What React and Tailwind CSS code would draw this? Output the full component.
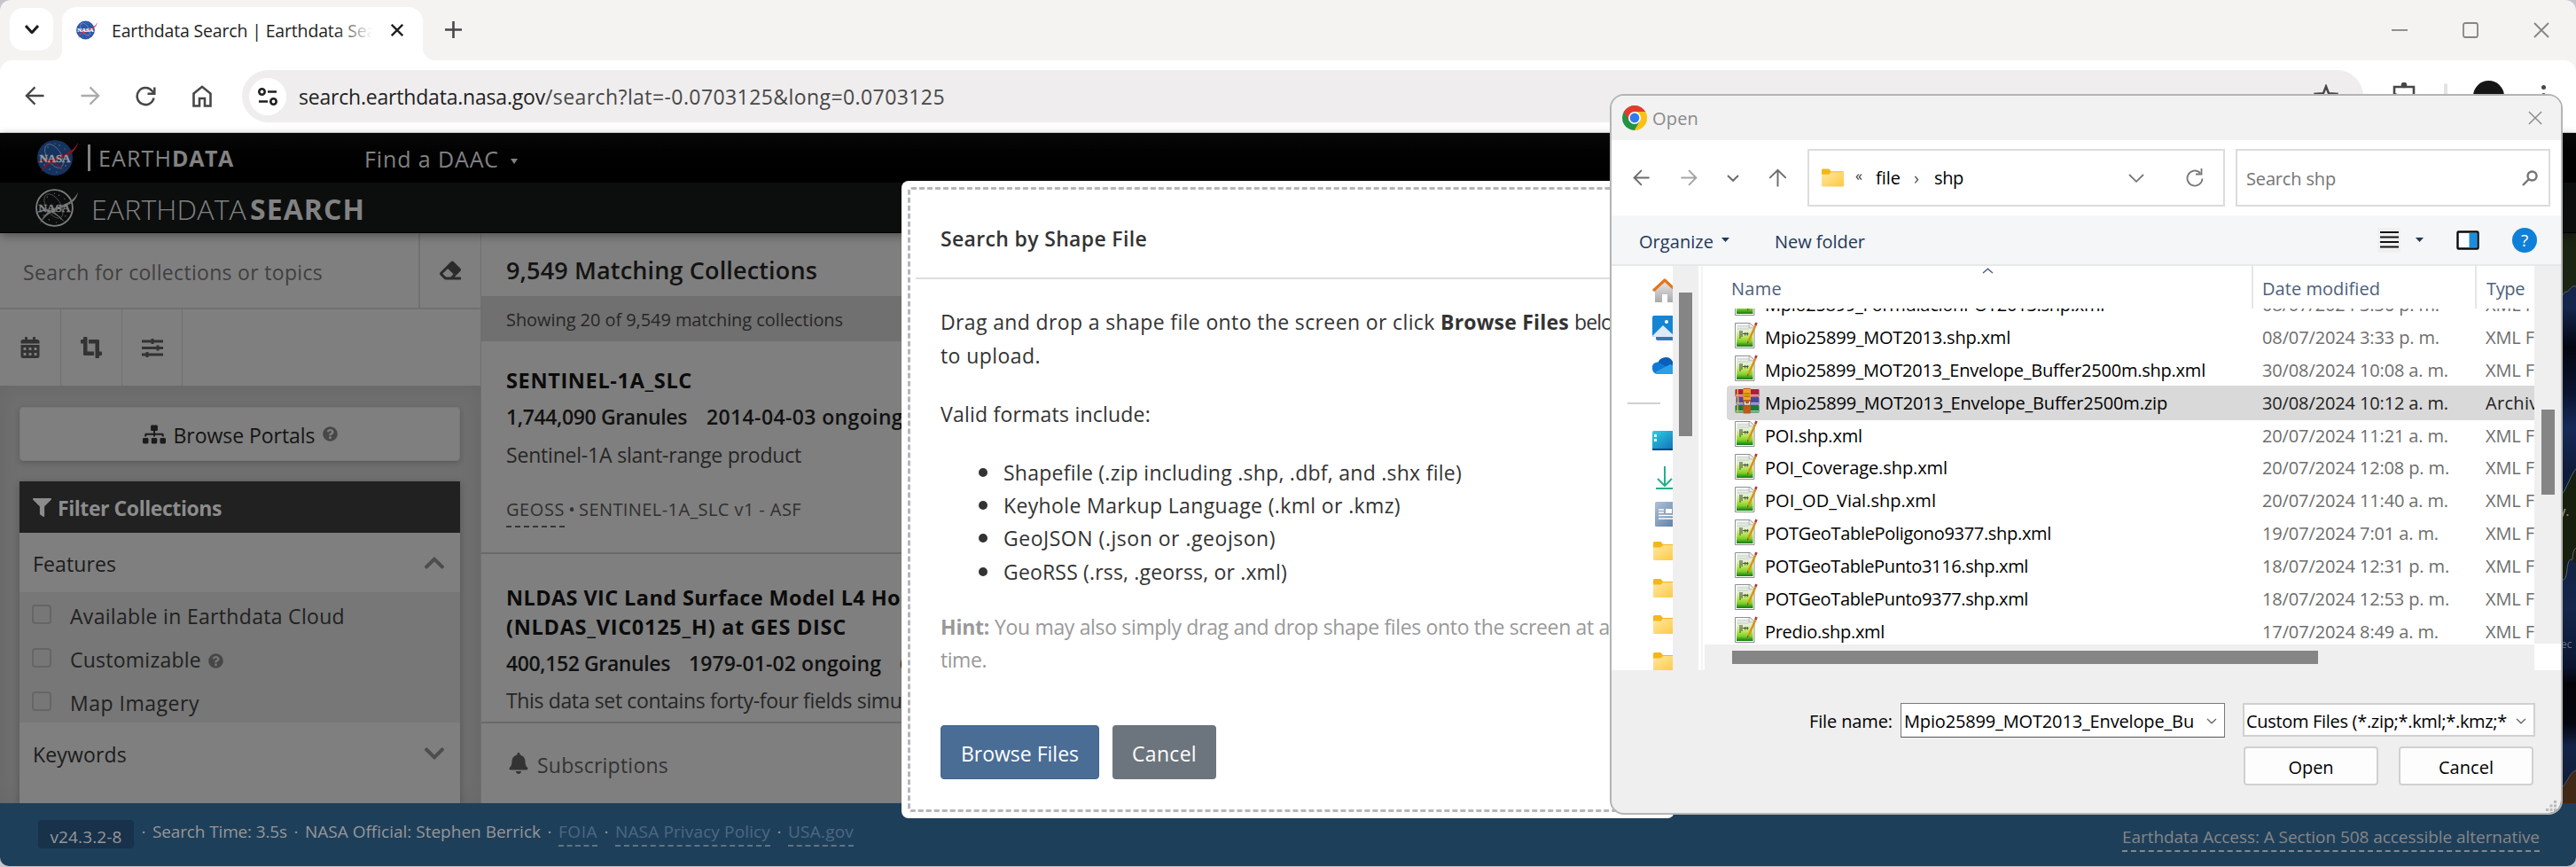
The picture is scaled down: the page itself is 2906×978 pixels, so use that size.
import React, { useLayoutEffect, useRef } from "react";
import {
  FaEraser,
  FaCalendarAlt,
  FaCropAlt,
  FaSitemap,
  FaQuestionCircle,
  FaFilter,
  FaBell,
  FaChevronUp,
  FaChevronDown,
} from "react-icons/fa";

/* Text run whose tracking is adjusted so that it spans `w` pixels. */
function T({ w, className = "", children }) {
  const ref = useRef(null);
  useLayoutEffect(() => {
    const el = ref.current;
    if (!w) return;
    el.style.letterSpacing = "0px";
    const natural = el.getBoundingClientRect().width;
    const n = el.textContent.length;
    el.style.letterSpacing = `${(w - natural) / n}px`;
  }, [w, children]);
  return (
    <span ref={ref} className={"inline-block shrink-0 whitespace-pre " + className}>
      {children}
    </span>
  );
}

/* ---------- shared icons ---------- */

const Arrow = ({ className = "", s = 24, sw = 2 }) => (
  <svg className={className} width={s} height={s} viewBox="0 0 24 24" fill="none" stroke="currentColor" strokeWidth={sw}>
    <path d="M23.500 12H2M12.500 1.500L2 12l10.500 10.500" />
  </svg>
);

const Chev = ({ className = "", w = 14, h = 8, sw = 1.8 }) => (
  <svg className={className} width={w} height={h} viewBox={`0 0 ${w} ${h}`} fill="none" stroke="currentColor" strokeWidth={sw}>
    <path d={`M1 1L${w / 2} ${h - 1.2}L${w - 1} 1`} />
  </svg>
);

const Caret = ({ className = "" }) => (
  <svg className={className} width="9" height="5" viewBox="0 0 9 5" fill="currentColor">
    <path d="M0 0h9L4.500 5z" />
  </svg>
);

const CloseX = ({ className = "", s = 18, sw = 1.6 }) => (
  <svg className={className} width={s} height={s} viewBox="0 0 18 18" fill="none" stroke="currentColor" strokeWidth={sw}>
    <path d="M1 1l16 16M17 1L1 17" />
  </svg>
);

const Meatball = ({ w, h, fill, red, ink, outline }) => (
  <svg width={w} height={h} viewBox="0 0 48 42" className="shrink-0">
    <circle cx="22" cy="21" r="20" fill={fill} stroke={outline || "none"} strokeWidth={outline ? 1.8 : 0} />
    <ellipse cx="21" cy="19" rx="8" ry="15" transform="rotate(-32 21 19)" fill="none" stroke={ink} strokeWidth=".7" opacity=".7" />
    <g fill={ink} opacity=".8">
      <circle cx="14" cy="9" r=".7" /><circle cx="27" cy="7" r=".7" /><circle cx="33" cy="11" r=".6" />
      <circle cx="10" cy="29" r=".7" /><circle cx="16" cy="34" r=".7" /><circle cx="29" cy="33" r=".8" />
      <circle cx="34" cy="30" r=".7" /><circle cx="24" cy="37" r=".6" /><circle cx="22" cy="5" r=".6" />
    </g>
    <path d="M48 3.500C42 16 30 17 19 22.500C13 26 9 31 5.500 39C10 32 15 28 21 25C33 19 46 17 48 3.500Z" fill={red} />
    <path d="M.5 27C8 22 12 22 16 23C22 25 29 31 34.500 38C27 31 21 26.500 15 25C10 24 6 25 .5 27Z" fill={red} />
    <text x="22" y="25.500" textAnchor="middle" fontFamily="Liberation Serif, serif" fontWeight="700" fontSize="13" textLength="35" fill={ink} stroke={ink} strokeWidth=".4">NASA</text>
  </svg>
);

const Folder = ({ w = 26, h = 21 }) => (
  <svg width={w} height={h} viewBox="0 0 26 21" className="shrink-0">
    <defs>
      <linearGradient id="fold" x1="0" y1="0" x2="1" y2="1">
        <stop offset="0" stopColor="#ffe8a3" /><stop offset="1" stopColor="#fec83f" />
      </linearGradient>
    </defs>
    <path d="M0 1.500A1.500 1.500 0 0 1 1.500 0H8.500L11 3H24.500A1.500 1.500 0 0 1 26 4.500V8H0Z" fill="#f6b519" />
    <path d="M0 6.500H8.500L11 4H25A1 1 0 0 1 26 5V19.500A1.500 1.500 0 0 1 24.500 21H1.500A1.500 1.500 0 0 1 0 19.500Z" fill="url(#fold)" />
  </svg>
);

/* ---------- browser chrome ---------- */

function TabStrip() {
  return (
    <div className="flex h-[68px] shrink-0 bg-[#f4f3f1]">
      <div className="ml-[11px] mt-[9px] flex h-[48px] w-[49px] items-center justify-center rounded-[15px] bg-white text-[#1d1d1f]">
        <Chev w={16} h={10} sw={3} />
      </div>
      <div className="flex h-full">
        <div className="w-[10px] self-end bg-white">
          <div className="h-[20px] rounded-br-[14px] bg-[#f4f3f1]" />
        </div>
        <div className="mt-[8px] flex w-[407px] items-center rounded-t-[16px] bg-white pb-[9px] pl-[15px]">
          <Meatball w={25} h={24} fill="#2a58a8" red="#e0323f" ink="#ffffff" />
          <div className="relative ml-[16px] mt-[3px] w-[294px] overflow-hidden text-[19.5px] leading-[30px] text-[#1f1f1f]">
            <T w={306}>Earthdata Search | Earthdata Sear</T>
            <div className="absolute inset-y-0 right-0 w-[42px] bg-gradient-to-r from-white/0 to-white" />
          </div>
          <CloseX className="ml-[21px] text-[#1f1f1f]" s={14} sw={3} />
        </div>
        <div className="w-[14px] self-end bg-white">
          <div className="h-[20px] rounded-bl-[14px] bg-[#f4f3f1]" />
        </div>
      </div>
      <svg className="ml-[11px] mt-[24px]" width="19" height="19" viewBox="0 0 19 19" stroke="#474747" strokeWidth="2.600">
        <path d="M9.500 0v19M0 9.500h19" />
      </svg>
      <div className="ml-auto mr-[30px] mt-[25px] flex gap-[62px] text-[#858585]">
        <svg width="18" height="18" stroke="currentColor" strokeWidth="1.800"><path d="M0 9h18" /></svg>
        <svg width="18" height="18" stroke="currentColor" strokeWidth="1.800" fill="none"><rect x="1" y="1" width="16" height="16" rx="2" /></svg>
        <CloseX sw={1.8} />
      </div>
    </div>
  );
}

function AddressBar() {
  return (
    <div className="bg-[#f4f3f1] shrink-0">
      <div className="flex h-[82px] rounded-t-[14px] border-b border-[#dcdcdc] bg-white pt-[11px]">
        <div className="flex h-[58px] w-[273px] items-center pl-[28px] text-[#474747]">
          <Arrow s={22} sw={2.500} />
          <Arrow s={22} sw={2.500} className="ml-[41px] rotate-180 text-[#ababab]" />
          <svg className="ml-[40px]" width="23" height="23" viewBox="0 0 23 23" fill="none" stroke="currentColor" strokeWidth="2.500">
            <path d="M20.500 13.500A9.500 9.500 0 1 1 18.500 5.500L21 8.500M21.300 1.500V8.800H13.500" />
          </svg>
          <svg className="ml-[41px]" width="22" height="25" viewBox="0 0 22 25" fill="none" stroke="currentColor" strokeWidth="2.600">
            <path d="M1.500 9.500L11 1.800L20.500 9.500V23.500H14V15H8V23.500H1.500Z" />
          </svg>
        </div>
        <div className="flex h-[59px] w-[2393px] shrink-0 items-center rounded-full bg-[#efedee] pl-[8px]">
          <div className="flex size-[42px] items-center justify-center rounded-full bg-white">
            <svg width="22" height="20" viewBox="0 0 22 20" fill="none" stroke="#1f1f1f" strokeWidth="2.600">
              <circle cx="4.500" cy="4.500" r="3.200" /><path d="M11 4.500h10M1 15.500h10" /><circle cx="17.500" cy="15.500" r="3.200" />
            </svg>
          </div>
          <T w={278} className="ml-[14px] text-[23px] leading-[36px] text-[#1f1f1f]">search.earthdata.nasa.gov</T>
          <T w={451} className="text-[23px] leading-[36px] text-[#474747]">/search?lat=-0.0703125&amp;long=0.0703125</T>
          <svg className="ml-auto mr-[28px]" width="28" height="27" viewBox="0 0 28 27" fill="none" stroke="#474747" strokeWidth="2.500">
            <path d="M14 2.500l3 7.800 8.500.5-6.500 5.500 2 8.500-7-4.500-7 4.500 2-8.500-6.500-5.500 8.500-.5z" />
          </svg>
        </div>
        <svg className="ml-[33px] mt-[14px]" width="28" height="30" viewBox="0 0 28 30" fill="none" stroke="#474747" strokeWidth="2.600">
          <path d="M2 5h22v9a3.500 3.500 0 0 1 0 8v6H2v-7a4 4 0 0 0 0-8z" /><circle cx="13" cy="3" r="2" fill="#474747" />
        </svg>
        <div className="ml-[30px] mt-[15px] h-[28px] w-[4px] rounded bg-[#e4e2e3]" />
        <div className="ml-[29px] mt-[12px] flex size-[35px] items-center justify-center rounded-full bg-[#161616] text-[8px] text-[#aaaaaa]">[P]</div>
        <div className="ml-[42px] mt-[17px] flex flex-col gap-[4px]">
          <span className="size-[5px] rounded-full bg-[#474747]" />
          <span className="size-[5px] rounded-full bg-[#474747]" />
          <span className="size-[5px] rounded-full bg-[#474747]" />
        </div>
      </div>
    </div>
  );
}

/* ---------- Earthdata page ---------- */

function SiteHeaders() {
  return (
    <div className="relative z-10 shrink-0 shadow-[0_3px_10px_rgba(0,0,0,0.35)]">
      <div className="flex h-[56px] items-center bg-gradient-to-b from-[#09090a] to-black pl-[40px] text-[#828282]">
        <Meatball w={48} h={42} fill="#15335f" red="#861420" ink="#9a9a9a" />
        <div className="ml-[11px] h-[30px] w-[3px] bg-[#828282]" />
        <T w={83} className="ml-[9px] mt-[1px] text-[25px]">EARTH</T>
        <T w={70} className="mt-[1px] text-[25px] font-bold">DATA</T>
        <T w={152} className="ml-[147px] mt-[4px] text-[25px]">Find a DAAC</T>
        <svg className="ml-[13px] mt-[8px]" width="8" height="6" fill="#828282"><path d="M0 0h8L4 6z" /></svg>
      </div>
      <div className="flex h-[57px] items-center border-b border-black bg-[#0c0e0e] pl-[39px] text-[#828282]">
        <Meatball w={49} h={43} fill="#0c0e0e" red="#6f6f6f" ink="#808080" outline="#7d7d7d" />
        <T w={175} className="ml-[15px] mt-[3px] text-[32px] font-light">EARTHDATA</T>
        <T w={130} className="ml-[4px] mt-[3px] text-[32px] font-bold">SEARCH</T>
      </div>
    </div>
  );
}

function CheckRow({ label, w, help }) {
  return (
    <div className="flex h-[49px] items-center pl-[14px]">
      <div className="size-[22px] rounded-[4px] border-2 border-[#666]" />
      <T w={w} className="ml-[21px] mt-[5px] text-[23px] leading-[32px] text-[#212121]">{label}</T>
      {help && <FaQuestionCircle className="ml-[8px] mt-[8px] size-[17px] text-[#474747]" />}
    </div>
  );
}

function Sidebar() {
  return (
    <div className="flex w-[543px] shrink-0 flex-col border-r border-[#707070] bg-[#7f7f7f]">
      <div className="flex h-[86px] shrink-0 border-b-2 border-[#717171]">
        <div className="flex w-[474px] items-center border-r-2 border-[#717171] pl-[26px]">
          <T w={338} className="mt-[4px] text-[23px] text-[#404040]">Search for collections or topics</T>
        </div>
        <div className="flex flex-1 items-center justify-center text-[#2b2b2b]">
          <FaEraser className="size-[24px]" />
        </div>
      </div>
      <div className="flex h-[86px] shrink-0 text-[#333]">
        <div className="flex w-[69px] items-center justify-center border-r border-[#707070]"><FaCalendarAlt className="size-[24px]" /></div>
        <div className="flex w-[69px] items-center justify-center border-r border-[#707070]"><FaCropAlt className="size-[24px]" /></div>
        <div className="flex w-[68px] items-center justify-center border-r border-[#707070]">
          <svg width="24" height="21" viewBox="0 0 24 21" stroke="currentColor" strokeWidth="3"><path d="M0 3h24M0 10.500h24M0 18h24" /><path d="M12 0v6M18 7.500v6M6 15v6" /></svg>
        </div>
      </div>
      <div className="flex-1 overflow-hidden bg-[#6f6f6f] px-[22px] pt-[24px] shadow-[inset_0_0_24px_rgba(0,0,0,0.08)]">
        <div className="flex h-[61px] w-[497px] items-center justify-center rounded-[4px] border border-[#787878] bg-[#7f7f7f] shadow-[0_2px_6px_rgba(0,0,0,0.2)]">
          <FaSitemap className="size-[26px] text-[#1b1b1b]" />
          <T w={160} className="ml-[9px] mt-[3px] text-[23px] text-[#141414]">Browse Portals</T>
          <FaQuestionCircle className="ml-[8px] size-[17px] text-[#474747]" />
        </div>
        <div className="mt-[23px] w-[497px] shadow-[0_2px_8px_rgba(0,0,0,0.25)]">
          <div className="flex h-[58px] items-center bg-[#212121] pl-[15px] text-[#8c8c8c]">
            <FaFilter className="size-[21px]" />
            <T w={185} className="ml-[7px] mt-[3px] text-[23px] font-bold">Filter Collections</T>
          </div>
          <div className="flex h-[67px] items-center justify-between bg-[#7f7f7f] pl-[15px] pr-[16px] text-[23px] text-[#1b1b1b]">
            <T w={94} className="mt-[3px]">Features</T>
            <FaChevronUp className="size-[26px] text-[#4d4d4d]" />
          </div>
          <div className="h-[147px] bg-[#777]">
            <CheckRow label="Available in Earthdata Cloud" w={310} />
            <CheckRow label="Customizable" w={148} help />
            <CheckRow label="Map Imagery" w={146} />
          </div>
          <div className="flex h-[120px] justify-between bg-[#7f7f7f] pl-[15px] pr-[16px] pt-[19px] text-[23px] text-[#1b1b1b]">
            <T w={106}>Keywords</T>
            <FaChevronDown className="mt-[3px] size-[26px] text-[#4d4d4d]" />
          </div>
        </div>
      </div>
    </div>
  );
}

function Results() {
  return (
    <div className="flex w-[700px] shrink-0 flex-col overflow-hidden bg-[#7f7f7f] text-[23px] leading-[34px] text-[#111]">
      <div className="flex h-[71px] shrink-0 items-center pl-[28px]">
        <T w={351} className="mt-[12px] text-[27px] font-semibold text-[#131313]">9,549 Matching Collections</T>
      </div>
      <div className="flex h-[51px] shrink-0 items-center bg-[#707070] pl-[28px]">
        <T w={380} className="mt-[3px] text-[20px] text-[#262626]">Showing 20 of 9,549 matching collections</T>
      </div>
      <div className="flex h-[240px] shrink-0 flex-col border-b-2 border-[#6a6a6a] pl-[28px] pt-[27px]">
        <T w={210} className="self-start text-[23.5px] font-bold text-[#0b0b0b]">SENTINEL-1A_SLC</T>
        <div className="mt-[7px] flex font-[570]">
          <T w={204}>1,744,090 Granules</T>
          <T w={222} className="ml-[22px]">2014-04-03 ongoing</T>
        </div>
        <T w={333} className="mt-[9px] self-start text-[#262626]">Sentinel-1A slant-range product</T>
        <div className="mt-[28px] flex text-[20px] font-medium text-[#303030]">
          <T w={66} className="h-[37px] border-b-2 border-dashed border-[#363636]">GEOSS</T>
          <span className="w-[16px] text-center">•</span>
          <T w={251}>SENTINEL-1A_SLC v1 - ASF</T>
        </div>
      </div>
      <div className="flex h-[191px] shrink-0 flex-col border-b-2 border-[#6a6a6a] pl-[28px] pt-[33px]">
        <div className="flex text-[23.5px] leading-[33px] font-bold text-[#0b0b0b]">
          <T w={445}>NLDAS VIC Land Surface Model L4 Ho</T>
          <T>urly</T>
        </div>
        <T w={384} className="self-start text-[23.5px] leading-[33px] font-bold text-[#0b0b0b]">(NLDAS_VIC0125_H) at GES DISC</T>
        <div className="mt-[7px] flex font-[570]">
          <T w={185}>400,152 Granules</T>
          <T w={217} className="ml-[21px]">1979-01-02 ongoing</T>
          <T className="ml-[21px]">6</T>
        </div>
        <T w={452} className="mt-[8px] self-start text-[#262626]">This data set contains forty-four fields simul</T>
      </div>
      <div className="flex h-[90px] items-center pl-[30px] text-[#333]">
        <FaBell className="size-[24px]" />
        <T w={148} className="ml-[9px] mt-[4px]">Subscriptions</T>
      </div>
    </div>
  );
}

function MapStrip() {
  return (
    <div className="flex flex-1 justify-end overflow-hidden bg-[#04060f]">
      <svg width="20" height="643" viewBox="0 0 20 643" fill="none">
        <defs>
          <linearGradient id="sea" x1="0" y1="0" x2="0" y2="643" gradientUnits="userSpaceOnUse">
            <stop offset="0" stopColor="#14203a" /><stop offset=".13" stopColor="#14264d" /><stop offset=".2" stopColor="#04060f" />
            <stop offset=".28" stopColor="#0a1430" /><stop offset=".34" stopColor="#152a57" /><stop offset=".42" stopColor="#0e1b3a" />
            <stop offset=".66" stopColor="#14264a" /><stop offset=".76" stopColor="#0b1530" /><stop offset=".79" stopColor="#030309" />
            <stop offset=".86" stopColor="#04050d" /><stop offset=".9" stopColor="#122347" /><stop offset="1" stopColor="#101a30" />
          </linearGradient>
        </defs>
        <rect width="20" height="643" fill="url(#sea)" />
        <path d="M0 0H20V60C14 58 12 68 8 66L3 72L0 70Z" fill="#1b2313" />
        <path d="M3 72L8 66C12 68 14 58 20 60" stroke="#55616a" />
        <path d="M20 266C14 272 10 288 3 296V390C10 396 8 370 12 368L20 372Z" fill="#17200f" />
        <path d="M20 266C14 272 10 288 3 296M3 390C12 396 8 370 14 368C18 372 14 360 20 355" stroke="#59656e" />
        <path d="M20 606C12 608 10 622 3 626V643H20Z" fill="#3f2815" />
        <path d="M20 606C12 608 10 622 3 626" stroke="#4a5566" />
        <text x="1" y="319" fontFamily="Open Sans, sans-serif" fontSize="14" fontWeight="600" fill="#8a8a8a">y.</text>
        <text x="3" y="468" fontFamily="Open Sans, sans-serif" fontSize="12" fill="#66707c">ec</text>
      </svg>
    </div>
  );
}

const Dot = () => <span className="w-[20px] shrink-0 text-center">·</span>;

function Footer() {
  return (
    <div className="flex h-[71px] shrink-0 bg-[#1e3f5a] pl-[43px] pr-[41px] text-[19px] leading-[26px] text-[#979797]">
      <div className="mt-[19px] flex h-[32px] w-[108px] items-center justify-center rounded-[4px] bg-[#17324a]">
        <T w={81} className="mt-[5px]">v24.3.2-8</T>
      </div>
      <div className="ml-[1px] mt-[19px] flex font-medium">
        <Dot />
        <T w={152}>Search Time: 3.5s</T>
        <Dot />
        <T w={266}>NASA Official: Stephen Berrick</T>
        <Dot />
        <T w={44} className="h-[30px] border-b-2 border-dashed border-[#5f7385] font-normal text-[#4d6883]">FOIA</T>
        <Dot />
        <T w={175} className="h-[30px] border-b-2 border-dashed border-[#5f7385] font-normal text-[#4d6883]">NASA Privacy Policy</T>
        <Dot />
        <T w={74} className="h-[30px] border-b-2 border-dashed border-[#5f7385] font-normal text-[#4d6883]">USA.gov</T>
      </div>
      <T w={471} className="ml-auto mt-[25px] h-[30px] border-b-2 border-dashed border-[#868686] text-[#868686]">
        Earthdata Access: A Section 508 accessible alternative
      </T>
    </div>
  );
}

/* ---------- shape file modal ---------- */

const formats = [
  ["Shapefile (.zip including .shp, .dbf, and .shx file)", 517],
  ["Keyhole Markup Language (.kml or .kmz)", 448],
  ["GeoJSON (.json or .geojson)", 307],
  ["GeoRSS (.rss, .georss, or .xml)", 320],
];

function ShapeModal() {
  return (
    <div className="absolute left-[1017px] top-[204px] z-20 h-[719px] w-[872px] overflow-hidden rounded-[8px] bg-white p-[7px] text-[23px] leading-[38px] text-[#333]">
      <div className="flex h-[705px] flex-col rounded-[4px] border-[3px] border-dashed border-[#b7b6ba] px-[6px]">
        <div className="flex h-[101px] shrink-0 items-center border-b-2 border-[#dcdddd] pl-[28px]">
          <T w={233} className="mt-[10px] font-semibold">Search by Shape File</T>
        </div>
        <div className="pl-[28px] pt-[29px]">
          <div className="flex">
            <T w={564}>{"Drag and drop a shape file onto the screen or click "}</T>
            <T w={151} className="font-bold">{"Browse Files "}</T>
            <T w={60}>below</T>
          </div>
          <T w={113}>to upload.</T>
          <div className="mt-[28px]"><T w={237}>Valid formats include:</T></div>
          <ul className="mt-[28px]">
            {formats.map(([t, w]) => (
              <li key={t} className="flex h-[37.300px] items-center">
                <span className="ml-[43px] mr-[18px] size-[10px] rounded-full bg-[#333]" />
                <T w={w}>{t}</T>
              </li>
            ))}
          </ul>
          <div className="mt-[26px] flex leading-[36.500px] text-[#999]">
            <T w={61} className="font-bold">{"Hint: "}</T>
            <T w={694}>You may also simply drag and drop shape files onto the screen at a</T>
            <T>ny</T>
          </div>
          <div className="leading-[36.500px] text-[#999]"><T w={52}>time.</T></div>
        </div>
        <div className="mb-[34px] mt-auto flex gap-[15px] pl-[28px] text-white">
          <div className="flex h-[61px] w-[179px] items-center justify-center rounded-[4px] border border-[#44658b] bg-[#4a6d96]">
            <T w={133} className="mt-[3px]">Browse Files</T>
          </div>
          <div className="flex h-[61px] w-[117px] items-center justify-center rounded-[4px] bg-[#6c757d]">
            <T w={73} className="mt-[3px]">Cancel</T>
          </div>
        </div>
      </div>
    </div>
  );
}

/* ---------- Windows file picker ---------- */

const NotepadIcon = () => (
  <svg width="27" height="30" viewBox="0 0 27 30" className="shrink-0">
    <defs>
      <linearGradient id="npp" x1="0" y1="0" x2="0" y2="1">
        <stop offset="0" stopColor="#eef1f0" /><stop offset=".3" stopColor="#e3efcb" /><stop offset=".55" stopColor="#bfe85c" /><stop offset=".78" stopColor="#7fd02a" /><stop offset="1" stopColor="#0e7a12" />
      </linearGradient>
    </defs>
    <path d="M.5 1.500H17L22 6V29.500H.5Z" fill="#fff" stroke="#8d8d8d" />
    <path d="M2 3H16V8H20.500V28H2Z" fill="url(#npp)" />
    <path d="M3 5h12M3 8h13" stroke="#c3ccd4" strokeWidth="1" />
    <path d="M16 2v5h5" fill="#e6e6e6" stroke="#a5a5a5" strokeWidth=".8" />
    <path d="M6 10v9M8 10v7M9 13.500h6.500M11.700 12v3.500M14.300 12v3.500" stroke="#4a524c" strokeWidth="1.100" fill="none" />
    <path d="M15 23L23.500 4" stroke="#d69413" strokeWidth="2.400" />
    <path d="M23.300 4L24.500 1" stroke="#b3343f" strokeWidth="2.600" />
    <path d="M13.800 25L14.300 22L16 22.800Z" fill="#6b5a33" />
  </svg>
);

const RarIcon = () => (
  <svg width="28" height="29" viewBox="0 0 28 29" className="shrink-0">
    <rect x=".5" y="1" width="27" height="8.500" rx="1" fill="#b31b3c" /><rect x="1" y="7" width="26" height="1.500" fill="#e8b9c3" />
    <rect x="1.500" y="10" width="26" height="8.500" rx="1" fill="#4b46a0" /><rect x="2" y="16" width="25" height="1.500" fill="#b9b7e0" />
    <rect x=".5" y="19" width="27" height="8.500" rx="1" fill="#1a7a3c" /><rect x="1" y="25" width="26" height="1.500" fill="#9fd0ad" />
    <rect x="2.500" y="1" width="1.500" height="8" fill="#f2b51d" /><rect x="3" y="10" width="1.500" height="8" fill="#f2b51d" /><rect x="2.500" y="19" width="1.500" height="8" fill="#f2b51d" />
    <rect x="9.500" y="0" width="8.500" height="28.500" rx="1" fill="#c2581a" />
    <path d="M9.500 1h8.500v12h-8.500z" fill="#f0a51c" />
    <path d="M10.500 19V14.500h2V17h3V14.500h2V19Z" fill="#f4f4f4" stroke="#6b4a2a" strokeWidth=".6" />
    <path d="M10.500 6h6.500M10.500 9h6.500" stroke="#8a5a10" />
  </svg>
);

const ChromeIcon = () => (
  <svg width="28" height="28" viewBox="0 0 28 28">
    <path d="M14 14L1.880 7A14 14 0 0 1 26.120 7Z" fill="#e33b2e" />
    <path d="M14 14L26.120 7A14 14 0 0 1 14 28Z" fill="#fbc116" />
    <path d="M14 14L14 28A14 14 0 0 1 1.880 7Z" fill="#229342" />
    <path d="M14 7H26.120L20 17.500Z" fill="#fbc116" /><path d="M20 17.400L14 28L8.500 18Z" fill="#229342" />
    <path d="M14 7h12.120A14 14 0 0 0 1.880 7L8 17.500Z" fill="#e33b2e" />
    <path d="M20.200 17.500L14 28A14 14 0 0 0 26.120 7H14Z" fill="#fbc116" />
    <circle cx="14" cy="14" r="7" fill="#fff" /><circle cx="14" cy="14" r="5.400" fill="#2f7bee" />
  </svg>
);

const ENV = "Mpio25899_MOT2013_Envelope_Buffer2500m";
const files = [
  ["Mpio25899_FormulacionPOT2013.shp.xml", 383, "08/07/2024 3:36 p. m.", 200],
  ["Mpio25899_MOT2013.shp.xml", 277, "08/07/2024 3:33 p. m.", 200],
  [ENV + ".shp.xml", 497, "30/08/2024 10:08 a. m.", 210],
  [ENV + ".zip", 454, "30/08/2024 10:12 a. m.", 210, true],
  ["POI.shp.xml", 110, "20/07/2024 11:21 a. m.", 210],
  ["POI_Coverage.shp.xml", 206, "20/07/2024 12:08 p. m.", 211],
  ["POI_OD_Vial.shp.xml", 193, "20/07/2024 11:40 a. m.", 210],
  ["POTGeoTablePoligono9377.shp.xml", 323, "19/07/2024 7:01 a. m.", 199],
  ["POTGeoTablePunto3116.shp.xml", 297, "18/07/2024 12:31 p. m.", 211],
  ["POTGeoTablePunto9377.shp.xml", 297, "18/07/2024 12:53 p. m.", 211],
  ["Predio.shp.xml", 135, "17/07/2024 8:49 a. m.", 199],
];

function FileRow({ name, w, date, dw, selected }) {
  return (
    <div className={"flex h-[36.900px] w-[910px] shrink-0 items-center pl-[8px] " + (selected ? "rounded-l-[3px] bg-[#d9d9d9] text-black shadow-[0_0_0_1px_#d9d9d9]" : "text-[#6d6d6d]")}>
      <div className="-mt-[5px] flex w-[34px] shrink-0">{selected ? <RarIcon /> : <NotepadIcon />}</div>
      <div className="w-[561px] shrink-0 text-black"><T w={w}>{name}</T></div>
      <div className={"w-[252px] shrink-0 " + (selected ? "text-[#222]" : "")}><T w={dw}>{date}</T></div>
      <T w={selected ? 72 : 76} className={selected ? "text-[#222]" : ""}>{selected ? "Archivo" : "XML File"}</T>
    </div>
  );
}

function NavPane() {
  return (
    <div className="flex w-[69px] shrink-0 flex-col overflow-hidden bg-white pl-[46px] pt-[14px]">
      <svg width="30" height="28" viewBox="0 0 30 28" className="shrink-0">
        <defs><linearGradient id="wall" x1="0" y1="0" x2="0" y2="1"><stop offset="0" stopColor="#e8e8e8" /><stop offset="1" stopColor="#a9a9a9" /></linearGradient></defs>
        <path d="M3 13L14 3L25 13V27H17V18H11V27H3Z" fill="url(#wall)" />
        <path d="M1 14L14 2L27 14" fill="none" stroke="#e5751c" strokeWidth="3.200" strokeLinejoin="round" />
      </svg>
      <svg width="30" height="28" viewBox="0 0 30 28" className="mt-[14px] shrink-0">
        <rect x="4" y="20" width="26" height="8" rx="2" fill="#3f74b5" />
        <rect width="30" height="24" rx="2" fill="#1585d3" /><path d="M0 23L12 11L26 24H2Z" fill="#dcebfa" /><circle cx="16" cy="7" r="2" fill="#fff" />
      </svg>
      <svg width="34" height="20" viewBox="0 0 34 20" className="mt-[18px] shrink-0">
        <path d="M6 9A9 9 0 0 1 23 6L28 14H8Z" fill="#0a5fb8" /><path d="M0 14A6 6 0 0 1 8 7L20 14L14 20H6A6 6 0 0 1 0 14Z" fill="#0f79d6" />
        <path d="M3 18L20 9L34 14V20H6Z" fill="#28a0ea" />
      </svg>
      <div className="-ml-[28px] mt-[32px] h-[2px] w-[37px] shrink-0 bg-[#cfcfcf]" />
      <svg width="30" height="22" viewBox="0 0 30 22" className="mt-[30px] shrink-0">
        <defs><linearGradient id="desk" x1="0" y1="0" x2="1" y2="1"><stop offset="0" stopColor="#2fd0e2" /><stop offset="1" stopColor="#0c62b4" /></linearGradient></defs>
        <rect width="30" height="22" rx="1.500" fill="url(#desk)" /><path d="M0 20h30v2H0z" fill="#0c4a7c" /><path d="M2 4h3v3H2zM2 9h3v3H2z" fill="#e8fbff" />
      </svg>
      <svg width="26" height="26" viewBox="0 0 26 26" className="ml-[3px] mt-[18px] shrink-0" fill="none" stroke="#25b08c" strokeWidth="2">
        <path d="M11 0v21M3 14l8 8 8-8M1 25h21" />
      </svg>
      <svg width="26" height="28" viewBox="0 0 26 28" className="ml-[3px] mt-[14px] shrink-0">
        <defs><linearGradient id="doc" x1="0" y1="0" x2="1" y2="1"><stop offset="0" stopColor="#adc3da" /><stop offset="1" stopColor="#5a7aa2" /></linearGradient></defs>
        <rect width="26" height="28" rx="1.500" fill="url(#doc)" /><path d="M4 9h6M4 12h6M4 15.500h18M4 19h18" stroke="#fff" strokeWidth="1.600" /><path d="M12 8h7v5h-7z" fill="#fff" />
      </svg>
      <div className="ml-[1px] mt-[17px] flex flex-col gap-[20.700px]">
        <Folder /><Folder /><Folder /><Folder />
      </div>
    </div>
  );
}

function OpenDialog() {
  return (
    <div className="absolute left-[1816px] top-[106px] z-30 flex h-[813px] w-[1075px] flex-col overflow-hidden rounded-[16px] border-2 border-[#b4b4b4] bg-[#efefef] bg-clip-padding text-[20px] leading-[30px] text-black">
      <div className="flex h-[50px] shrink-0 items-center bg-[#f2f2f2] pl-[12px] pr-[21px] text-[#8a8a8a]">
        <ChromeIcon />
        <T w={52} className="ml-[6px] mt-[2px]">Open</T>
        <CloseX s={16} sw={1.6} className="ml-auto" />
      </div>
      <div className="flex h-[85px] shrink-0 items-center bg-white text-[#6b6b6b]">
        <Arrow s={19} sw={2.4} className="ml-[24px]" />
        <Arrow s={19} sw={2.4} className="ml-[35px] rotate-180 text-[#a5a5a5]" />
        <Chev w={14} h={8} sw={2} className="ml-[33px]" />
        <Arrow s={21} sw={2.2} className="ml-[33px] rotate-90" />
        <div className="ml-[23px] flex h-[65px] w-[471px] shrink-0 items-center border-2 border-[#dcdcdc] pl-[14px] text-black">
          <Folder w={25} h={21} />
          <span className="-mt-[6px] ml-[13px] w-[12px] text-[16px] text-[#333]">«</span>
          <T w={28} className="ml-[11px]">file</T>
          <span className="w-[38px] pr-[2px] text-center text-[#555]">›</span>
          <T w={33}>shp</T>
          <Chev w={18} h={10} sw={1.8} className="ml-auto text-[#777]" />
          <svg className="ml-[47px] mr-[22px] text-[#777]" width="20" height="21" viewBox="0 0 20 21" fill="none" stroke="currentColor" strokeWidth="1.800">
            <path d="M18.500 11.500A8.500 8.500 0 1 1 16 5M17.500 0V6.500H11" />
          </svg>
        </div>
        <div className="ml-[12px] flex h-[65px] w-[355px] shrink-0 items-center border-2 border-[#dcdcdc] pl-[10px] text-[#757575]">
          <T w={101} className="mt-[2px]">Search shp</T>
          <svg className="ml-auto mr-[12px]" width="18" height="18" viewBox="0 0 18 18" fill="none" stroke="#757575" strokeWidth="2.400">
            <circle cx="11.500" cy="6.500" r="5" /><path d="M8 10L1 17" />
          </svg>
        </div>
      </div>
      <div className="flex h-[57px] shrink-0 items-center border-b-2 border-[#e6e8ea] bg-[#f4f6f8] pl-[31px] text-[#1e395b]">
        <T w={84} className="mt-[4px]">Organize</T>
        <Caret className="ml-[9px]" />
        <T w={102} className="ml-[51px] mt-[4px]">New folder</T>
        <div className="ml-auto flex h-[28px] w-[26px] items-center justify-center bg-[#f0f0f0]">
          <svg width="21" height="19" stroke="#111" strokeWidth="2"><path d="M0 1h21M0 6.500h21M0 12h21M0 17.500h21" /></svg>
        </div>
        <Caret className="ml-[17px]" />
        <svg className="ml-[37px]" width="26" height="22" viewBox="0 0 26 22">
          <rect x="1.500" y="1.500" width="23" height="19" rx="1" fill="#fff" stroke="#0b0b0b" strokeWidth="2.400" /><path d="M14.500 2.700h9v16.600h-9z" fill="#1a8ddd" />
        </svg>
        <div className="ml-[37px] mr-[27px] flex size-[28px] items-center justify-center rounded-full bg-[#0f80d8] text-[19px] font-medium text-white">?</div>
      </div>
      <div className="flex h-[456px] shrink-0 bg-white">
        <NavPane />
        <div className="w-[29px] shrink-0 bg-[#efefef] pl-[7px] pt-[30px]"><div className="h-[162px] w-[15px] bg-[#858585]" /></div>
        <div className="ml-[3px] mr-[2px] w-[2px] shrink-0 bg-[#f4f4f4]" />
        <div className="flex w-[936px] shrink-0 flex-col overflow-hidden">
          <div className="flex h-[48px] shrink-0 pl-[30px] text-[#4c607a]">
            <div className="flex w-[589px] border-r-2 border-[#e5e5e5]">
              <T w={57} className="mt-[11px]">Name</T>
              <Chev w={13} h={7} sw={1.4} className="ml-[226px] mt-[2px] rotate-180" />
            </div>
            <div className="w-[252px] border-r-2 border-[#e5e5e5] pl-[10px]"><T w={133} className="mt-[11px]">Date modified</T></div>
            <T w={43} className="ml-[11px] mt-[11px]">Type</T>
          </div>
          <div className="flex h-[379px] shrink-0 flex-col overflow-hidden pl-[26px]">
            <div className="-mt-[22.500px]">
              {files.map(([name, w, date, dw, sel]) => (
                <FileRow key={name} name={name} w={w} date={date} dw={dw} selected={sel} />
              ))}
            </div>
          </div>
          <div className="flex-1 bg-[#efefef] pl-[31px] pt-[7px]"><div className="h-[15px] w-[661px] bg-[#858585]" /></div>
        </div>
        <div className="flex-1">
          <div className="h-[426px] bg-[#efefef] pl-[8px] pt-[162px]"><div className="h-[96px] w-[15px] bg-[#858585]" /></div>
        </div>
      </div>
      <div className="flex flex-1 flex-col pl-[223px] pt-[37px]">
        <div className="flex">
          <T w={94} className="mt-[6px]">File name:</T>
          <div className="ml-[9px] flex h-[39px] w-[366px] items-center border border-[#7b7b7b] border-b-[#555] bg-white pl-[3px] pt-[2px]">
            <T w={327}>Mpio25899_MOT2013_Envelope_Bu</T>
            <Chev w={12} h={7} sw={1.3} className="ml-auto mr-[8px] text-[#666]" />
          </div>
          <div className="ml-[20px] flex h-[38px] w-[330px] items-center border-2 border-[#d0d0d0] bg-[#fdfdfd] pl-[2px] pt-[3px]">
            <T w={294}>Custom Files (*.zip;*.kml;*.kmz;*</T>
            <Chev w={12} h={7} sw={1.3} className="ml-auto mr-[8px] text-[#666]" />
          </div>
        </div>
        <div className="ml-[490px] mt-[10px] flex gap-[23px]">
          <div className="flex h-[44px] w-[152px] items-center justify-center rounded-[4px] border-2 border-[#d0d0d0] bg-[#fdfdfd] pt-[3px]"><T w={51}>Open</T></div>
          <div className="flex h-[44px] w-[152px] items-center justify-center rounded-[4px] border-2 border-[#d0d0d0] bg-[#fdfdfd] pt-[3px]"><T w={62}>Cancel</T></div>
        </div>
        <svg className="ml-auto mr-[5px] mt-auto mb-[2px]" width="12" height="12" fill="#b9b9b9">
          <path d="M9 0h3v3H9zM4.500 4.500h3v3h-3zM9 4.500h3v3H9zM0 9h3v3H0zM4.500 9h3v3h-3zM9 9h3v3H9z" />
        </svg>
      </div>
    </div>
  );
}

export default function App() {
  return (
    <div className="relative h-[978px] w-[2906px] overflow-hidden bg-[#c3c6ca] font-['Open_Sans','Noto_Sans',sans-serif]">
      <div className="flex h-[977px] flex-col overflow-hidden rounded-b-[10px] rounded-t-[12px]">
        <TabStrip />
        <AddressBar />
        <SiteHeaders />
        <div className="flex h-[643px] shrink-0 overflow-hidden">
          <Sidebar />
          <Results />
          <MapStrip />
        </div>
        <Footer />
      </div>
      <ShapeModal />
      <OpenDialog />
    </div>
  );
}
